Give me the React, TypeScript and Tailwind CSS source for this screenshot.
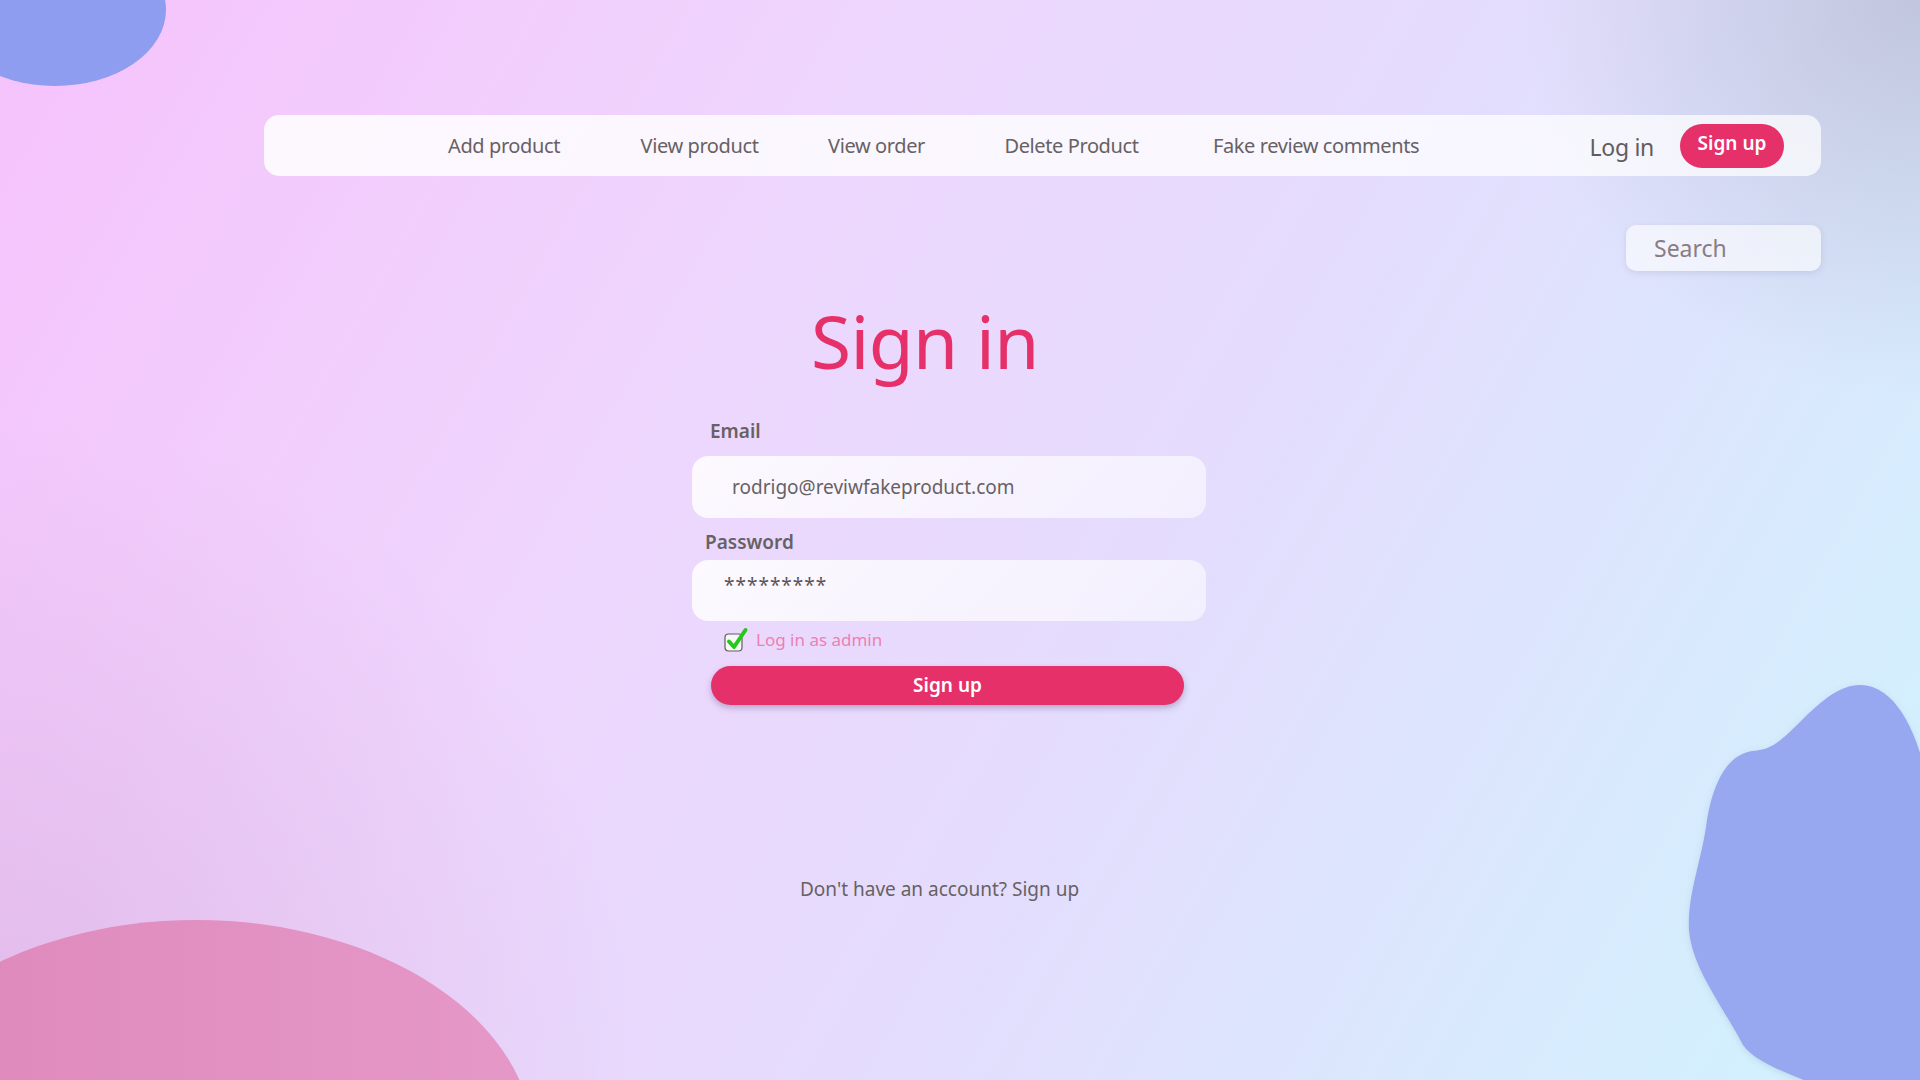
import { useState } from "react";

const navLinks = [
  { label: "Add product", w: "w-[114px]" },
  { label: "View product", w: "w-[121px]" },
  { label: "View order", w: "w-[99px]" },
  { label: "Delete Product", w: "w-[135px]" },
  { label: "Fake review comments", w: "w-[206px]" },
];

const Blobs = () => (
  <svg
    className="absolute inset-0 w-full h-full pointer-events-none"
    viewBox="0 0 1920 1080"
    preserveAspectRatio="none"
  >
    <defs>
      <linearGradient id="pinkBlob" x1="0" y1="0" x2="1" y2="0">
        <stop offset="0" stopColor="#de87bb" />
        <stop offset="1" stopColor="#e598c8" />
      </linearGradient>
      <filter id="soft" x="-10%" y="-10%" width="120%" height="120%">
        <feDropShadow dx="0" dy="2" stdDeviation="3" floodColor="#6070a0" floodOpacity="0.18" />
      </filter>
    </defs>
    <ellipse cx="55" cy="10" rx="111" ry="76" fill="#8e9def" />
    <ellipse cx="196" cy="1145" rx="338" ry="225" fill="url(#pinkBlob)" />
    <path
      filter="url(#soft)"
      fill="#97a7f0"
      d="M1860 685 C1895 685 1915 730 1925 770 L1925 1085 L1815 1085 C1785 1072 1755 1062 1743 1045 C1722 1005 1692 968 1689 930 C1687 895 1702 860 1707 820 C1714 780 1728 755 1752 751 C1770 750 1778 744 1800 722 C1822 700 1840 685 1860 685 Z"
    />
  </svg>
);

const AdminCheck = ({ checked }: { checked: boolean }) => (
  <svg viewBox="0 0 28 26" className="w-[28px] h-[26px]">
    <rect x="1" y="8" width="17" height="17" rx="3.5" fill="#f7f7f7" stroke="#5e5e5e" strokeWidth="1.2" />
    {checked && (
      <path
        d="M5 15.5 L10 21 L21.5 4"
        fill="none"
        stroke="#26c81b"
        strokeWidth="4"
        strokeLinecap="round"
        strokeLinejoin="round"
      />
    )}
  </svg>
);

export default function App() {
  const [admin, setAdmin] = useState(true);

  return (
    <div className="relative w-full h-[1080px] overflow-hidden bg-[linear-gradient(120deg,#f6c2fc_0%,#eed6fd_35%,#e4ddfd_60%,#cff4fd_100%)] font-['Noto_Sans',sans-serif] text-[#676164]">
      {/* corner tints */}
      <div className="absolute inset-0 bg-[radial-gradient(circle_at_100%_0%,rgba(170,172,195,0.55),transparent_18%)]" />
      <div className="absolute inset-0 bg-[radial-gradient(circle_at_0%_100%,rgba(205,160,210,0.45),transparent_30%)]" />
      <Blobs />

      <div className="relative pt-[115px]">
        {/* Nav */}
        <nav className="ml-[264px] w-[1557px] h-[61px] rounded-[15px] bg-[linear-gradient(90deg,rgba(255,255,255,0.85),rgba(255,255,255,0.72))] flex items-center pl-[183px] pr-[37px]">
          {navLinks.map((link, i) => (
            <a
              key={link.label}
              href="#"
              className={`${link.w} ${i === 0 ? "" : i === 2 ? "ml-[67px]" : i === 4 ? "ml-[74px]" : "ml-[78px]"} whitespace-nowrap text-center text-[20px] tracking-[-0.4px] text-[#676164]`}
            >
              {link.label}
            </a>
          ))}
          <div className="ml-auto flex items-center">
            <a href="#" className="text-[23px] text-[#625c60] tracking-[-0.3px] mt-[3px]">
              Log in
            </a>
            <button className="ml-[26px] w-[104px] h-[44px] rounded-full bg-[#e6306a] text-white text-[19px] font-semibold pb-[4px]">
              Sign up
            </button>
          </div>
        </nav>

        {/* Search */}
        <div className="mt-[49px] flex justify-end pr-[99px]">
          <input
            placeholder="Search"
            className="w-[195px] h-[46px] rounded-[10px] bg-white/60 shadow-[0_2px_6px_rgba(120,110,160,0.18)] pl-[28px] text-[23px] text-[#8a7c82] placeholder:text-[#8a7c82] outline-none"
          />
        </div>

        {/* Form */}
        <div className="ml-[692px] w-[514px]">
          <h1 className="ml-[119px] mt-[22px] text-[73px] leading-[96px] text-[#e6306a] tracking-[-0.6px]">
            Sign in
          </h1>

          <label className="block ml-[18px] mt-[29px] text-[19px] font-semibold leading-[26px] text-[#676164]">
            Email
          </label>
          <div className="mt-[12px] h-[62px] rounded-[16px] bg-[linear-gradient(135deg,rgba(255,255,255,0.85),rgba(255,255,255,0.55))] flex items-center pl-[40px] text-[19px] text-[#676164]">
            rodrigo@reviwfakeproduct.com
          </div>

          <label className="block ml-[13px] mt-[11px] text-[19px] font-semibold leading-[26px] text-[#676164]">
            Password
          </label>
          <div className="mt-[5px] h-[61px] rounded-[16px] bg-[linear-gradient(135deg,rgba(255,255,255,0.85),rgba(255,255,255,0.55))] pl-[32px] pt-[12px] text-[19px] leading-[26px] tracking-[1px] text-[#5a5457]">
            *********
          </div>

          <label
            className="mt-[4px] ml-[32px] flex items-center gap-[4px] cursor-pointer w-fit"
            onClick={() => setAdmin(!admin)}
          >
            <AdminCheck checked={admin} />
            <span className="text-[17px] text-[#ef7eb2] leading-[24px] mt-[3px]">Log in as admin</span>
          </label>

          <button className="mt-[14px] ml-[19px] w-[473px] h-[39px] rounded-full bg-[#e6306a] text-white text-[19px] font-semibold shadow-[0_3px_6px_rgba(90,70,120,0.35)]">
            Sign up
          </button>
        </div>

        <p className="mt-[170px] ml-[800px] text-[19px] text-[#676164]">
          Don't have an account? Sign up
        </p>
      </div>
    </div>
  );
}
